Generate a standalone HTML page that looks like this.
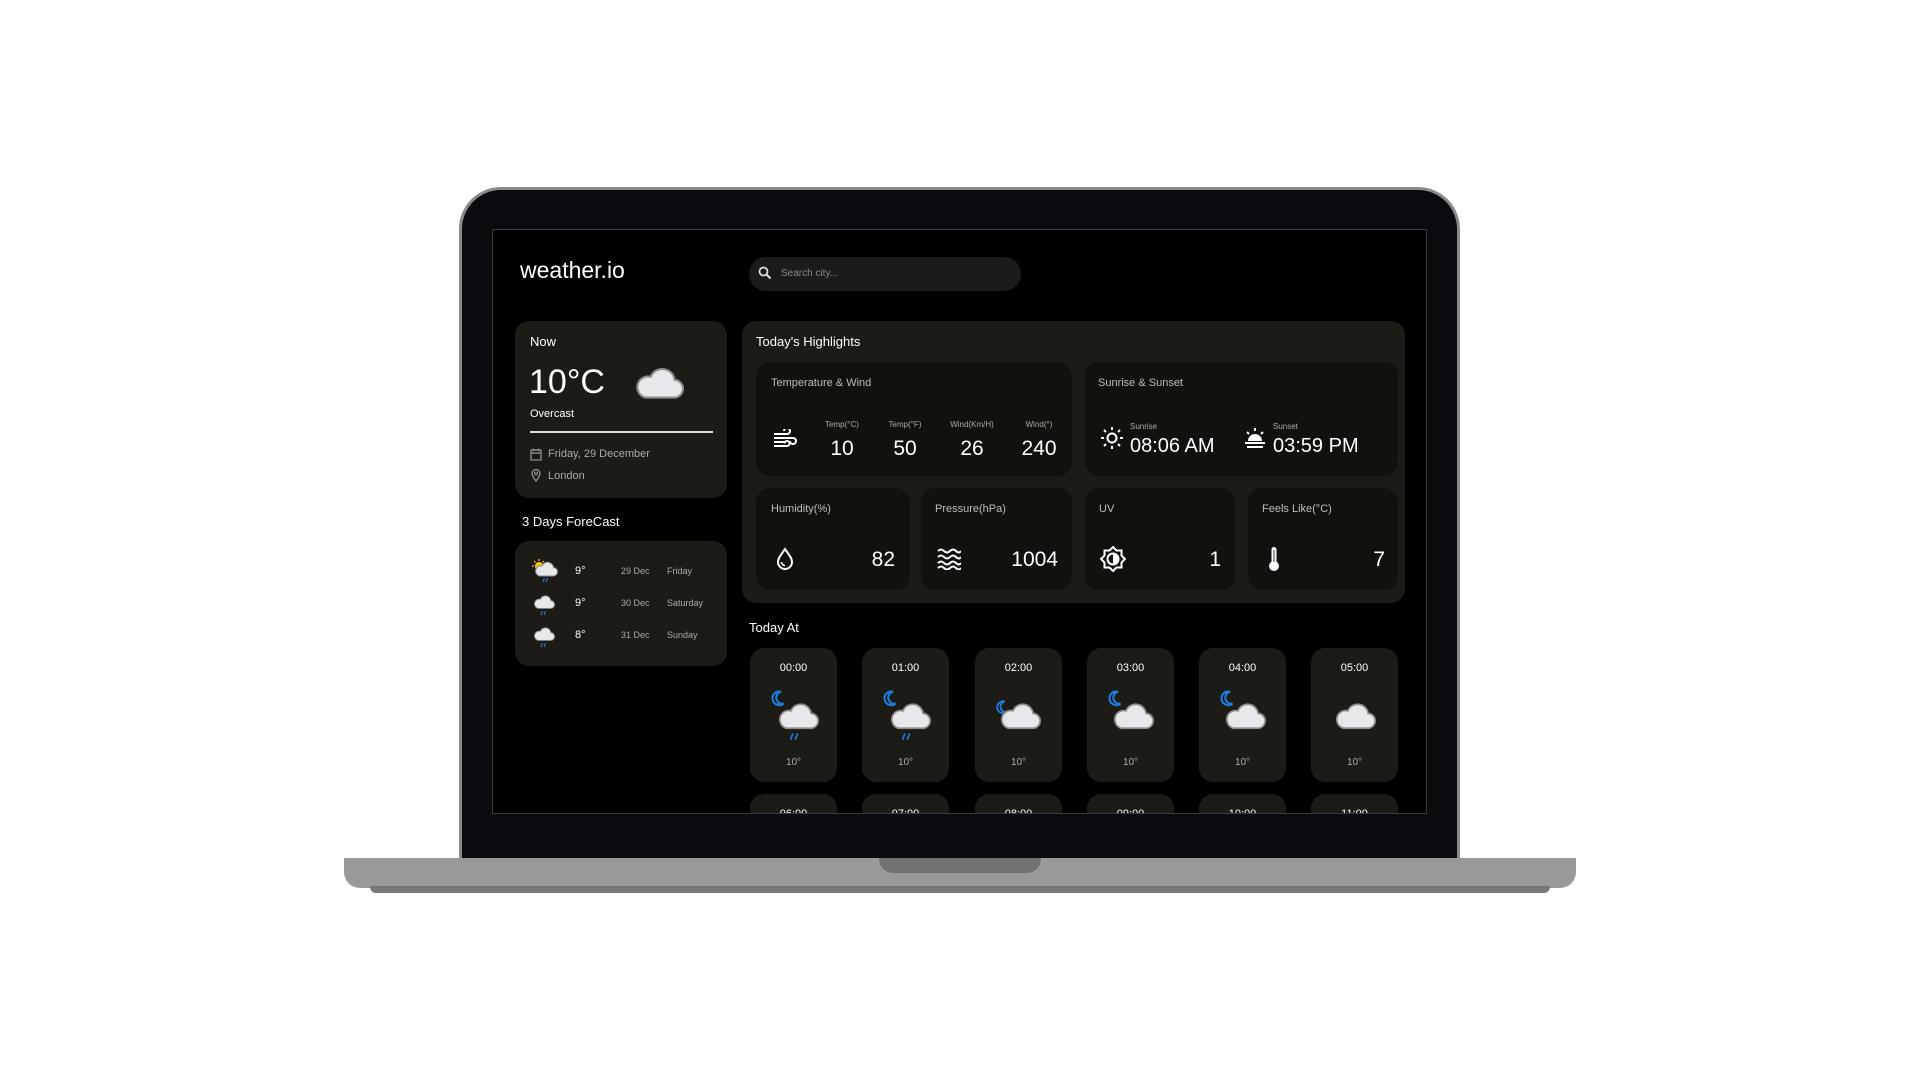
<!DOCTYPE html>
<html><head><meta charset="utf-8"><style>
*{margin:0;padding:0;box-sizing:border-box}
body{width:1920px;height:1080px;background:#fff;position:relative;overflow:hidden;font-family:"Liberation Sans",sans-serif;color:#fff}
.a{position:absolute}
.lid{left:459px;top:187px;width:1001px;height:680px;background:#0c0a0e;border:3px solid #8a8a8a;border-bottom:none;border-radius:42px 42px 0 0}
.screen{left:492px;top:229px;width:935px;height:585px;background:#000;border:1px solid #3a3a3a;overflow:hidden}
.base{left:344px;top:858px;width:1232px;height:30px;background:#999;border-radius:0 0 16px 16px}
.foot{left:370px;top:886px;width:1180px;height:7px;background:#777;border-radius:0 0 6px 6px}
.notch{left:879px;top:858px;width:162px;height:15px;background:#727272;border-radius:0 0 14px 14px}
.card{background:#1c1b16;border-radius:14px}
.in{background:#12110d;border-radius:14px}
.lbl{font-size:11px;color:#bdbdbd}
.g{color:#aaa}
.t{white-space:nowrap}
</style></head><body>
<svg width="0" height="0" style="position:absolute">
<defs>
<symbol id="cloud" viewBox="0 0 48 32"><path d="M11 30 H38 A8.5 8.5 0 0 0 39 13 A12 12 0 0 0 16 10 A10 10 0 0 0 11 30 Z" fill="#e8e8ea" stroke="#8d8d8d" stroke-width="2"/></symbol>
<symbol id="moon" viewBox="0 0 20 20"><path d="M13 2 A8 8 0 1 0 16 16 A7 7 0 0 1 13 2 Z" fill="#0a0a0a" stroke="#1e7ad6" stroke-width="2.6"/></symbol>
<symbol id="rain" viewBox="0 0 14 10"><path d="M5 1 L2 9 M11 1 L8 9" stroke="#1e7ad6" stroke-width="2.2"/></symbol>
</defs></svg>

<div class="a lid"></div>
<div class="a base"></div><div class="a foot"></div><div class="a notch"></div>

<div class="a screen">
<div style="position:absolute;left:-492px;top:-229px;width:1920px;height:1080px">
 <div class="a t" style="left:519px;top:256px;font-size:23px">weather.io</div>
 <div class="a" style="left:748px;top:256px;width:272px;height:34px;background:#1b1b1b;border-radius:17px"></div>
 <svg class="a" style="left:757px;top:265px" width="14" height="14" viewBox="0 0 14 14"><circle cx="5.5" cy="5.5" r="4" fill="none" stroke="#ddd" stroke-width="1.8"/><path d="M8.5 8.5 L12.5 12.5" stroke="#ddd" stroke-width="2"/></svg>
 <div class="a t" style="left:780px;top:267px;font-size:10px;color:#888">Search city...</div>

 <div class="a card" style="left:514px;top:320px;width:212px;height:177px"></div>
 <div class="a t" style="left:529px;top:333px;font-size:13px">Now</div>
 <div class="a t" style="left:528px;top:362px;font-size:34px">10°C</div>
 <svg class="a" style="left:633px;top:364px" width="50" height="36"><use href="#cloud"/></svg>
 <div class="a t" style="left:529px;top:407px;font-size:11px">Overcast</div>
 <div class="a" style="left:529px;top:430px;width:183px;height:2px;background:#ddd"></div>
 <svg class="a" style="left:529px;top:447px" width="12" height="13" viewBox="0 0 12 13"><rect x="1" y="2" width="10" height="10" fill="none" stroke="#999" stroke-width="1.2"/><path d="M1 5 H11 M3.5 0.5 V3 M8.5 0.5 V3" stroke="#999" stroke-width="1.2"/></svg>
 <div class="a t g" style="left:547px;top:447px;font-size:11px">Friday, 29 December</div>
 <svg class="a" style="left:530px;top:468px" width="10" height="13" viewBox="0 0 10 13"><path d="M5 12 C1 7 1 5 1 4.5 A4 4 0 0 1 9 4.5 C9 5 9 7 5 12Z" fill="none" stroke="#999" stroke-width="1.2"/><circle cx="5" cy="4.5" r="1.5" fill="none" stroke="#999"/></svg>
 <div class="a t g" style="left:547px;top:469px;font-size:11px">London</div>

 <div class="a t" style="left:521px;top:513px;font-size:13px">3 Days ForeCast</div>
 <div class="a card" style="left:514px;top:540px;width:212px;height:125px"></div>
 <svg class="a" style="left:531px;top:558px" width="14" height="14" viewBox="0 0 14 14"><circle cx="7" cy="7" r="4" fill="#f5c518"/><path d="M7 0V2M0 7H2M2 2L3.5 3.5M12 2L10.5 3.5" stroke="#f5c518" stroke-width="1.2"/></svg>
 <svg class="a" style="left:533px;top:560px" width="24" height="16"><use href="#cloud"/></svg>
 <svg class="a" style="left:541px;top:576px" width="7" height="6"><use href="#rain"/></svg>
 <svg class="a" style="left:532px;top:593px" width="22" height="16"><use href="#cloud"/></svg>
 <svg class="a" style="left:539px;top:609px" width="7" height="6"><use href="#rain"/></svg>
 <svg class="a" style="left:532px;top:625px" width="22" height="16"><use href="#cloud"/></svg>
 <svg class="a" style="left:539px;top:641px" width="7" height="6"><use href="#rain"/></svg>
 <div class="a t" style="left:574px;top:564px;font-size:11px">9°</div>
 <div class="a t" style="left:574px;top:596px;font-size:11px">9°</div>
 <div class="a t" style="left:574px;top:628px;font-size:11px">8°</div>
 <div class="a t g" style="left:620px;top:565px;font-size:9px">29 Dec</div>
 <div class="a t g" style="left:620px;top:597px;font-size:9px">30 Dec</div>
 <div class="a t g" style="left:620px;top:629px;font-size:9px">31 Dec</div>
 <div class="a t g" style="left:666px;top:565px;font-size:9px">Friday</div>
 <div class="a t g" style="left:666px;top:597px;font-size:9px">Saturday</div>
 <div class="a t g" style="left:666px;top:629px;font-size:9px">Sunday</div>

 <div class="a card" style="left:741px;top:320px;width:663px;height:282px"></div>
 <div class="a t" style="left:755px;top:333px;font-size:13px">Today's Highlights</div>
 <div class="a in" style="left:755px;top:361px;width:316px;height:114px"></div>
 <div class="a in" style="left:1084px;top:361px;width:313px;height:114px"></div>
 <div class="a lbl t" style="left:770px;top:376px">Temperature &amp; Wind</div>
 <div class="a lbl t" style="left:1097px;top:376px">Sunrise &amp; Sunset</div>
 <svg class="a" style="left:772px;top:428px" width="24" height="20" viewBox="0 0 24 20"><path d="M1 5H14A3 3 0 1 0 11 2M1 9H20A3 3 0 1 1 17 12M1 13H12M1 17H14A2.5 2.5 0 1 0 11.5 14.5" fill="none" stroke="#fff" stroke-width="2"/></svg>
 <div class="a t" style="left:821px;top:419px;width:40px;text-align:center;font-size:8px;color:#aaa">Temp(°C)</div>
 <div class="a t" style="left:884px;top:419px;width:40px;text-align:center;font-size:8px;color:#aaa">Temp(°F)</div>
 <div class="a t" style="left:946px;top:419px;width:50px;text-align:center;font-size:8px;color:#aaa">Wind(Km/H)</div>
 <div class="a t" style="left:1018px;top:419px;width:40px;text-align:center;font-size:8px;color:#aaa">Wind(°)</div>
 <div class="a t" style="left:811px;top:436px;width:60px;text-align:center;font-size:21px">10</div>
 <div class="a t" style="left:874px;top:436px;width:60px;text-align:center;font-size:21px">50</div>
 <div class="a t" style="left:941px;top:436px;width:60px;text-align:center;font-size:21px">26</div>
 <div class="a t" style="left:1008px;top:436px;width:60px;text-align:center;font-size:21px">240</div>
 <svg class="a" style="left:1099px;top:425px" width="24" height="24" viewBox="0 0 24 24"><circle cx="12" cy="12" r="4.5" fill="none" stroke="#fff" stroke-width="2"/><path d="M12 1V4M12 20V23M1 12H4M20 12H23M4 4L6 6M18 18L20 20M4 20L6 18M18 6L20 4" stroke="#fff" stroke-width="2"/></svg>
 <div class="a t" style="left:1129px;top:421px;font-size:8px;color:#aaa">Sunrise</div>
 <div class="a t" style="left:1129px;top:434px;font-size:20px">08:06 AM</div>
 <svg class="a" style="left:1242px;top:426px" width="24" height="22" viewBox="0 0 24 22"><path d="M5 14A7 7 0 0 1 19 14Z" fill="#fff"/><path d="M2 16H22M4 20H20M12 1V4M4 5L6 7M20 5L18 7" stroke="#fff" stroke-width="2"/></svg>
 <div class="a t" style="left:1272px;top:421px;font-size:8px;color:#aaa">Sunset</div>
 <div class="a t" style="left:1272px;top:434px;font-size:20px">03:59 PM</div>

 <div class="a in" style="left:755px;top:487px;width:154px;height:102px"></div>
 <div class="a in" style="left:920px;top:487px;width:151px;height:102px"></div>
 <div class="a in" style="left:1084px;top:487px;width:150px;height:102px"></div>
 <div class="a in" style="left:1247px;top:487px;width:150px;height:102px"></div>
 <div class="a lbl t" style="left:770px;top:502px">Humidity(%)</div>
 <div class="a lbl t" style="left:934px;top:502px">Pressure(hPa)</div>
 <div class="a lbl t" style="left:1098px;top:502px">UV</div>
 <div class="a lbl t" style="left:1261px;top:502px">Feels Like(°C)</div>
 <svg class="a" style="left:774px;top:546px" width="20" height="24" viewBox="0 0 20 24"><path d="M10 2C6 8 3 11 3 15A7 7 0 0 0 17 15C17 11 14 8 10 2Z" fill="none" stroke="#fff" stroke-width="2"/><path d="M6.5 15A3.5 3.5 0 0 0 10 18.5" fill="none" stroke="#fff" stroke-width="1.6"/></svg>
 <svg class="a" style="left:936px;top:547px" width="24" height="22" viewBox="0 0 24 22"><path d="M1 3Q4 0 7 3T13 3T19 3T24 3M1 9Q4 6 7 9T13 9T19 9T24 9M1 15Q4 12 7 15T13 15T19 15T24 15M1 20Q4 17 7 20T13 20T19 20T24 20" fill="none" stroke="#fff" stroke-width="2"/></svg>
 <svg class="a" style="left:1099px;top:545px" width="26" height="26" viewBox="0 0 26 26"><path d="M13 1L16.5 4.5H21.5V9.5L25 13L21.5 16.5V21.5H16.5L13 25L9.5 21.5H4.5V16.5L1 13L4.5 9.5V4.5H9.5Z" fill="none" stroke="#fff" stroke-width="2"/><circle cx="13" cy="13" r="5.5" fill="none" stroke="#fff" stroke-width="2"/><path d="M13 7.5A5.5 5.5 0 0 1 13 18.5Z" fill="#fff"/></svg>
 <svg class="a" style="left:1267px;top:545px" width="12" height="26" viewBox="0 0 12 26"><rect x="3.5" y="1" width="5" height="17" rx="2.5" fill="#fff"/><circle cx="6" cy="20" r="5" fill="#fff"/><path d="M6 4V16" stroke="#333" stroke-width="1"/></svg>
 <div class="a t" style="left:830px;top:547px;width:64px;text-align:right;font-size:21px">82</div>
 <div class="a t" style="left:983px;top:547px;width:74px;text-align:right;font-size:21px">1004</div>
 <div class="a t" style="left:1156px;top:547px;width:64px;text-align:right;font-size:21px">1</div>
 <div class="a t" style="left:1320px;top:547px;width:64px;text-align:right;font-size:21px">7</div>

 <div class="a t" style="left:748px;top:619px;font-size:13px">Today At</div>

 <div class="a card" style="left:749px;top:647px;width:87px;height:134px"></div>
 <div class="a card" style="left:861px;top:647px;width:87px;height:134px"></div>
 <div class="a card" style="left:974px;top:647px;width:87px;height:134px"></div>
 <div class="a card" style="left:1086px;top:647px;width:87px;height:134px"></div>
 <div class="a card" style="left:1198px;top:647px;width:87px;height:134px"></div>
 <div class="a card" style="left:1310px;top:647px;width:87px;height:134px"></div>
 <div class="a t" style="left:749px;top:661px;width:87px;text-align:center;font-size:11px">00:00</div>
 <div class="a t" style="left:861px;top:661px;width:87px;text-align:center;font-size:11px">01:00</div>
 <div class="a t" style="left:974px;top:661px;width:87px;text-align:center;font-size:11px">02:00</div>
 <div class="a t" style="left:1086px;top:661px;width:87px;text-align:center;font-size:11px">03:00</div>
 <div class="a t" style="left:1198px;top:661px;width:87px;text-align:center;font-size:11px">04:00</div>
 <div class="a t" style="left:1310px;top:661px;width:87px;text-align:center;font-size:11px">05:00</div>
 <svg class="a" style="left:769px;top:689px" width="17" height="17"><use href="#moon"/></svg>
 <svg class="a" style="left:776px;top:700px" width="42" height="30"><use href="#cloud"/></svg>
 <svg class="a" style="left:788px;top:731px" width="11" height="9"><use href="#rain"/></svg>
 <svg class="a" style="left:881px;top:689px" width="17" height="17"><use href="#moon"/></svg>
 <svg class="a" style="left:888px;top:700px" width="42" height="30"><use href="#cloud"/></svg>
 <svg class="a" style="left:900px;top:731px" width="11" height="9"><use href="#rain"/></svg>
 <svg class="a" style="left:994px;top:699px" width="15" height="15"><use href="#moon"/></svg>
 <svg class="a" style="left:998px;top:700px" width="42" height="30"><use href="#cloud"/></svg>
 <svg class="a" style="left:1106px;top:689px" width="17" height="17"><use href="#moon"/></svg>
 <svg class="a" style="left:1111px;top:700px" width="42" height="30"><use href="#cloud"/></svg>
 <svg class="a" style="left:1218px;top:689px" width="17" height="17"><use href="#moon"/></svg>
 <svg class="a" style="left:1223px;top:700px" width="42" height="30"><use href="#cloud"/></svg>
 <svg class="a" style="left:1333px;top:700px" width="42" height="30"><use href="#cloud"/></svg>
 <div class="a t" style="left:749px;top:756px;width:87px;text-align:center;font-size:10px;color:#aaa">10°</div>
 <div class="a t" style="left:861px;top:756px;width:87px;text-align:center;font-size:10px;color:#aaa">10°</div>
 <div class="a t" style="left:974px;top:756px;width:87px;text-align:center;font-size:10px;color:#aaa">10°</div>
 <div class="a t" style="left:1086px;top:756px;width:87px;text-align:center;font-size:10px;color:#aaa">10°</div>
 <div class="a t" style="left:1198px;top:756px;width:87px;text-align:center;font-size:10px;color:#aaa">10°</div>
 <div class="a t" style="left:1310px;top:756px;width:87px;text-align:center;font-size:10px;color:#aaa">10°</div>
 <div class="a card" style="left:749px;top:793px;width:87px;height:60px"></div>
 <div class="a card" style="left:861px;top:793px;width:87px;height:60px"></div>
 <div class="a card" style="left:974px;top:793px;width:87px;height:60px"></div>
 <div class="a card" style="left:1086px;top:793px;width:87px;height:60px"></div>
 <div class="a card" style="left:1198px;top:793px;width:87px;height:60px"></div>
 <div class="a card" style="left:1310px;top:793px;width:87px;height:60px"></div>
 <div class="a t" style="left:749px;top:807px;width:87px;text-align:center;font-size:11px">06:00</div>
 <div class="a t" style="left:861px;top:807px;width:87px;text-align:center;font-size:11px">07:00</div>
 <div class="a t" style="left:974px;top:807px;width:87px;text-align:center;font-size:11px">08:00</div>
 <div class="a t" style="left:1086px;top:807px;width:87px;text-align:center;font-size:11px">09:00</div>
 <div class="a t" style="left:1198px;top:807px;width:87px;text-align:center;font-size:11px">10:00</div>
 <div class="a t" style="left:1310px;top:807px;width:87px;text-align:center;font-size:11px">11:00</div>
</div>
</div>
</body></html>
